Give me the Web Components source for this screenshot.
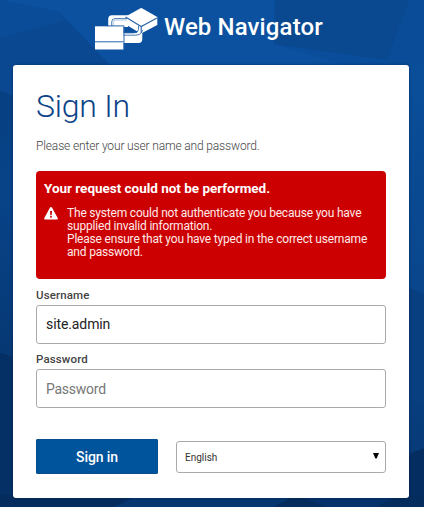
<!DOCTYPE html>
<html lang="en">
<head>
<meta charset="utf-8">
<title>Web Navigator</title>
<style>
html,body{margin:0;height:100%;overflow:hidden}
body{font-family:Roboto,"Liberation Sans",sans-serif}
</style>
</head>
<body>
<sign-in-page>
  <brand-header slot="header">Web Navigator</brand-header>
  <sign-in-card>
    <span slot="title">Sign In</span>
    <span slot="intro">Please enter your user name and password.</span>
    <error-message>
      <span slot="title">Your request could not be performed.</span>
      <div>The system could not authenticate you because you have</div>
      <div>supplied invalid information.</div>
      <div>Please ensure that you have typed in the correct username</div>
      <div>and password.</div>
    </error-message>
    <text-field label="Username">site.admin</text-field>
    <text-field label="Password" empty>Password</text-field>
    <action-button slot="actions">Sign in</action-button>
    <language-select slot="actions">English</language-select>
  </sign-in-card>
</sign-in-page>
<script>
function define(name, html) {
  const t = document.createElement('template');
  t.innerHTML = html;
  customElements.define(name, class extends HTMLElement {
    constructor() {
      super();
      this.attachShadow({mode: 'open'}).append(t.content.cloneNode(true));
    }
    connectedCallback() {
      const label = this.shadowRoot.querySelector('[data-label]');
      if (label) label.textContent = this.getAttribute('label');
    }
  });
}

define('sign-in-page', `<style>
:host{display:block;position:relative;box-sizing:border-box;width:424px;height:507px;overflow:hidden;background:#094d98}
.backdrop{position:absolute;inset:0;width:424px;height:507px}
.content{position:relative;display:flex;flex-direction:column}
.main{padding:0 15px 0 13px}
</style>
<svg class="backdrop" viewBox="0 0 424 507" preserveAspectRatio="none">
<defs><linearGradient id="left" gradientUnits="userSpaceOnUse" x1="0" y1="90" x2="0" y2="360"><stop offset="0" stop-color="#074183"/><stop offset=".4" stop-color="#084388"/><stop offset="1" stop-color="#063873"/></linearGradient>
<linearGradient id="right" gradientUnits="userSpaceOnUse" x1="0" y1="65" x2="0" y2="460"><stop offset="0" stop-color="#0a4e9a"/><stop offset=".55" stop-color="#09468c"/><stop offset="1" stop-color="#073a77"/></linearGradient></defs>
<path fill="#0a4d9a" d="M0 0H424V507H0z"/>
<path fill="#0b519f" d="M0 0H275L274 44L345 65H110L59 12z"/>
<path fill="#0a4992" d="M0 0L59 12L110 65H13V100L0 92z"/>
<path fill="#0a4c97" d="M0 0L59 12L65 20L0 38z"/>
<path fill="#0a488f" d="M275 0H409L387 60L274 44z"/>
<path fill="#0a4c97" d="M409 0H424V65H387z"/>
<path fill="url(#left)" d="M0 90L16 97V358L0 352z"/>
<path fill="#053065" d="M0 352L16 358V507H0z"/>
<path fill="url(#right)" d="M405 65H424V448L405 456z"/>
<path fill="#083f80" d="M405 286L424 294V407L405 387z"/>
<path fill="#042e61" d="M405 455L424 448V507H405z"/>
<path fill="#05326b" d="M0 495H424V507H0z"/>
<path fill="#063770" d="M140 495H300L274 507H115z"/>
<path fill="#042d5e" d="M0 495H137L113 507H0zM296 495L274 507H327zM400 495H424V507H375z"/>
</svg>
<div class="content"><slot name="header"></slot><div class="main"><slot></slot></div></div>`);

define('brand-header', `<style>
:host{display:flex;height:65px;padding-left:94px;color:#fff;font-size:24px;font-weight:500;line-height:28px}
svg{width:64px;height:65px;flex:none}
span{padding:13px 0 0 6px;letter-spacing:.12px;white-space:nowrap}
</style>
<svg viewBox="94 0 64 65" fill="#fff">
<path d="M108.200 27V19Q108.200 15.200 112 15.200H128V27z"/>
<path d="M123 33H136L139 31H142.300V39Q142.300 43 138.500 43H123z"/>
<path d="M142 8.200Q141.200 7.900 140.500 8.300L125.700 16.500V24.500L140.800 33.500L142 33L157.300 25V17z"/>
<g fill="none" stroke="#2864a9" stroke-width=".85"><path d="M111.700 26V22Q111.700 18.600 115 18.600H127"/><path stroke="#7ba1cd" stroke-width=".6" d="M113.400 26V22.500Q113.400 20 116 20H127"/><path stroke-width="1.100" d="M125.500 17L141.200 26.500L157 18"/><path stroke-width="1.100" d="M141.200 26.500V33"/><path d="M123 35.200H135Q141.800 35.200 142.500 30"/><path d="M123 32.900H134Q138 32.900 138.500 29.500V26"/></g>
<path d="M95 26.300H123.500V49.500H95z"/>
<path fill="none" stroke="#2864a9" d="M95 41.800H123.500M107 25.900H124V49"/>
</svg><span><slot></slot></span>`);

define('sign-in-card', `<style>
:host{display:flex;flex-direction:column;box-sizing:border-box;width:396px;height:433px;background:#fff;border-radius:3px;padding:22px 23px 0;box-shadow:0 0 3px rgba(0,20,55,.5)}
h1{margin:0;height:38px;font-size:32px;font-weight:300;letter-spacing:-.22px;line-height:38px;color:#0b4388;white-space:nowrap}
p{margin:13px 0 0;height:16px;font-size:12px;font-weight:300;letter-spacing:-.145px;line-height:16px;color:#444;white-space:nowrap}
.body{margin-top:17px}
.actions{display:flex;align-items:center;gap:18px;margin-top:31px}
</style><h1><slot name="title"></slot></h1><p><slot name="intro"></slot></p><div class="body"><slot></slot></div><div class="actions"><slot name="actions"></slot></div>`);

define('error-message', `<style>
:host{display:block;box-sizing:border-box;width:350px;height:108px;border-radius:4px;background:#c00;color:#fff;padding:8px}
.title{font-size:13.5px;font-weight:700;letter-spacing:-.02px;line-height:18px;white-space:nowrap}
.row{display:flex;gap:9px;margin-top:10px}
svg{width:14px;height:13px;flex:none}
.text{font-size:12px;letter-spacing:-.19px;line-height:13px;color:#ffe9e9;white-space:nowrap}
.text ::slotted(div:first-child){text-indent:1px}
</style><div class="title"><slot name="title"></slot></div><div class="row"><svg viewBox="0 0 14 13"><path fill="#fff" d="M7 0Q7.700 0 8.100.8L13.800 11.200Q14 12.500 13 12.500H1Q0 12.500.2 11.200L5.900.8Q6.300 0 7 0"/><path fill="#c00" d="M6 4H8L7.700 8.200H6.300zM6.200 9.100H7.800V10.700H6.200z"/></svg><div class="text"><slot></slot></div></div>`);

define('text-field', `<style>
:host{display:block;color:#222}
label{display:block;height:14px;padding-top:9px;margin-bottom:3px;font-size:11.5px;font-weight:500;letter-spacing:.14px;line-height:14px;color:#444}
:host([empty]) label{padding-top:8px;margin-bottom:3px}
.box{box-sizing:border-box;width:350px;height:39px;border:1px solid #aaa;border-radius:3px;padding:0 9px;font-size:14px;letter-spacing:-.1px;line-height:37px}
:host([empty]) .box{color:#777;letter-spacing:-.25px;line-height:38px}
</style><label data-label></label><div class="box"><slot></slot></div>`);

define('action-button', `<style>
:host{display:block;box-sizing:border-box;width:122px;height:35px;border-radius:2px;background:#00549c;color:#fff;text-align:center;font-size:14px;font-weight:500;letter-spacing:-.1px;line-height:37px;box-shadow:inset 0 0 0 1px #064e8d}
</style><slot></slot>`);

define('language-select', `<style>
:host{display:flex;align-items:center;justify-content:space-between;box-sizing:border-box;width:210px;height:32px;border:1px solid #aaa;border-radius:3px;padding:2px 6px 0 8px;font-size:10px;color:#333}
svg{width:6px;height:6px;margin-bottom:4px}
</style><slot></slot><svg viewBox="0 0 6 6"><path d="M0 0H6L3.600 5.500H2.400z"/></svg>`);
</script>
</body>
</html>
